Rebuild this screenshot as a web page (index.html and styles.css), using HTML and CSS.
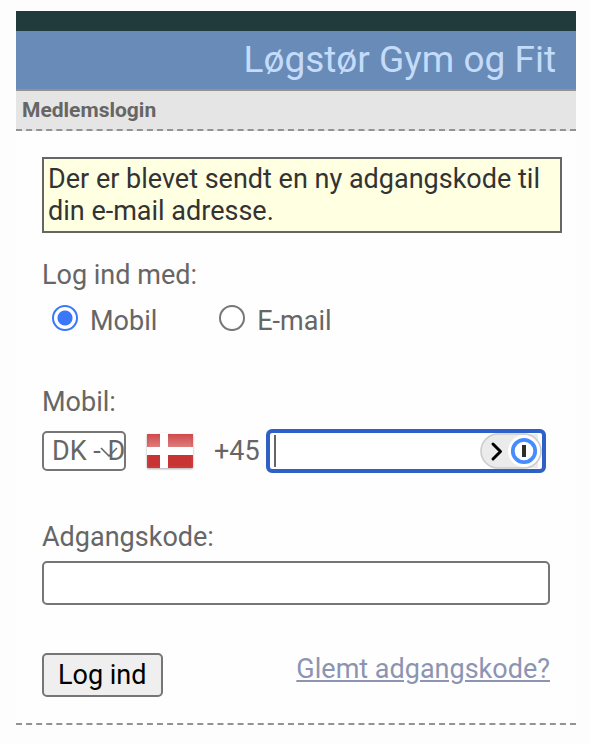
FILE: index.html
```html
<!DOCTYPE html>
<html lang="da">
<head>
<meta charset="utf-8">
<meta name="viewport" content="width=device-width, initial-scale=1">
<title>Medlemslogin</title>
<link rel="stylesheet" href="styles.css">
</head>
<body>
<div class="page">
  <header class="banner">
    <h1 class="banner-title">Løgstør Gym og Fit</h1>
  </header>
  <h2 class="section-title">Medlemslogin</h2>
  <form class="login">
    <p class="notice">Der er blevet sendt en ny adgangskode til din e-mail adresse.</p>
    <fieldset class="method">
      <legend class="label">Log ind med:</legend>
      <div class="options">
        <label class="option"><input class="radio" type="radio" name="method" checked><span class="option-text">Mobil</span></label>
        <label class="option"><input class="radio" type="radio" name="method"><span class="option-text">E-mail</span></label>
      </div>
    </fieldset>
    <div class="field field-phone">
      <label class="label" for="phone">Mobil:</label>
      <div class="phone-row">
        <div class="country">
          <select class="country-select" aria-label="Landekode">
            <option>DK - Danmark</option>
          </select>
          <svg class="country-arrow" viewBox="0 0 18 10" aria-hidden="true"><path d="M1 1 9 9 17 1" fill="none" stroke="#666" stroke-width="1.6"/></svg>
        </div>
        <svg class="flag" viewBox="0 0 48 38" aria-hidden="true">
          <defs>
            <linearGradient id="gloss" x1="0" y1="0" x2="0" y2="1">
              <stop offset="0" stop-color="#d04a4c"/>
              <stop offset="1" stop-color="#df8080"/>
            </linearGradient>
          </defs>
          <rect x="1" y="2" width="46" height="34" rx="1" fill="#c83434"/>
          <rect x="1" y="2" width="46" height="14" rx="1" fill="url(#gloss)"/>
          <path d="M2 3H46V35H2Z" fill="none" stroke="#d94a4a" stroke-opacity=".5"/>
          <path d="M14 1h8v35h-8zM1 15h46v8H1z" fill="#fff"/>
        </svg>
        <span class="prefix">+45</span>
        <div class="phone">
          <input class="phone-input" id="phone" type="tel">
          <span class="caret"></span>
          <svg class="manager" viewBox="0 0 62 36" aria-hidden="true">
            <path d="M40 1H58V35H40Z" fill="#ebebeb"/>
            <rect x="1" y="1" width="60" height="34" rx="17" fill="#ebebeb" stroke="#ccc" stroke-width="1.6"/>
            <circle cx="44" cy="18" r="16" fill="#fff"/>
            <circle cx="44" cy="18" r="11.2" fill="#fff" stroke="#478cff" stroke-width="3.8"/>
            <path d="M44 12v12" stroke="#2d2d2d" stroke-width="4"/>
            <path d="m13 11 7.5 7.5L13 26" fill="none" stroke="#000" stroke-width="3" stroke-linecap="round" stroke-linejoin="round"/>
          </svg>
        </div>
      </div>
    </div>
    <div class="field field-password">
      <label class="label" for="password">Adgangskode:</label>
      <input class="password" id="password" type="password">
    </div>
    <div class="actions">
      <button class="submit" type="submit">Log ind</button>
      <a class="forgot" href="#">Glemt adgangskode?</a>
    </div>
  </form>
</div>
</body>
</html>
```

FILE: styles.css
```css
* {
  box-sizing: border-box;
}

body {
  margin: 0;
  padding: 11px 14px 0 16px;
  background: #fdfdfd;
  color: #666;
  font: 27px/32px Roboto, "Liberation Sans", sans-serif;
}

.page {
  background: #fefefe;
}

.banner {
  padding-right: 20px;
  border-top: 20px solid #213a3b;
  border-bottom: 2px solid #939393;
  background: #698bb8;
  color: #c4dcfa;
  text-align: right;
}

.banner-title {
  margin: 0;
  font-size: 37px;
  font-weight: 400;
  line-height: 58px;
}

.section-title {
  margin: 0;
  padding: 0 6px;
  border-bottom: 2px dashed #939393;
  background: #e5e5e5;
  font-size: 21px;
  font-weight: 700;
  line-height: 38px;
}

.login {
  padding: 26px;
  border-bottom: 2px dashed #939393;
}

.notice {
  margin: 0 -12px 0 0;
  padding: 4px;
  border: 2px solid #666;
  background: #ffffe2;
  color: #333;
}

.method {
  min-width: 0;
  margin: 26px 0 0;
  padding: 0;
  border: 0;
}

.label {
  display: block;
  padding: 0;
}

.options {
  display: flex;
  gap: 62px;
  padding: 14px 0 0 10px;
}

.option {
  display: flex;
  align-items: flex-start;
  gap: 12px;
}

.radio {
  appearance: none;
  width: 26px;
  height: 26px;
  margin: 0;
  border: 2px solid #767676;
  border-radius: 50%;
  background: #fff;
}

.radio:checked {
  border-color: #3b78f7;
  background: radial-gradient(circle, #3b78f7 7px, #fff 8px);
}

.field-phone {
  margin-top: 49px;
}

.phone-row {
  display: flex;
  align-items: center;
  margin-top: 11px;
}

.country {
  position: relative;
}

.country-select {
  display: block;
  appearance: none;
  width: 84px;
  height: 40px;
  padding: 0 0 0 8px;
  border: 2px solid #767676;
  border-radius: 5px;
  background: #fff;
  color: #666;
  font: inherit;
  overflow: hidden;
  text-overflow: clip;
}

.country-arrow {
  position: absolute;
  top: 16px;
  right: 8px;
  width: 18px;
  height: 10px;
}

.flag {
  width: 48px;
  height: 38px;
  margin: 0 20px;
  filter: drop-shadow(0 1px 1px #aaa);
}

.prefix {
  margin-right: 6px;
}

.phone {
  position: relative;
  flex: 1;
  margin-right: 4px;
}

.phone-input {
  display: block;
  width: 100%;
  height: 44px;
  padding: 0 64px 0 4px;
  border: 4px solid #2f60c6;
  border-radius: 6px;
  outline: 0;
  background: #fff;
  color: #333;
  font: inherit;
}

.caret {
  position: absolute;
  top: 6px;
  left: 8px;
  width: 2px;
  height: 32px;
  background: #666;
}

.manager {
  position: absolute;
  top: 4px;
  right: 4px;
  width: 62px;
  height: 36px;
}

.field-password {
  margin-top: 48px;
}

.password {
  display: block;
  width: 100%;
  height: 44px;
  margin-top: 8px;
  padding: 0 8px;
  border: 2px solid #767676;
  border-radius: 5px;
  background: #fff;
  color: #333;
  font: inherit;
}

.actions {
  display: flex;
  align-items: flex-start;
  justify-content: space-between;
  margin-top: 48px;
}

.submit {
  height: 44px;
  padding: 0 14px;
  border: 2px solid #767676;
  border-radius: 5px;
  background: #efefef;
  color: #000;
  font: inherit;
}

.forgot {
  color: #8d94b2;
}
```
